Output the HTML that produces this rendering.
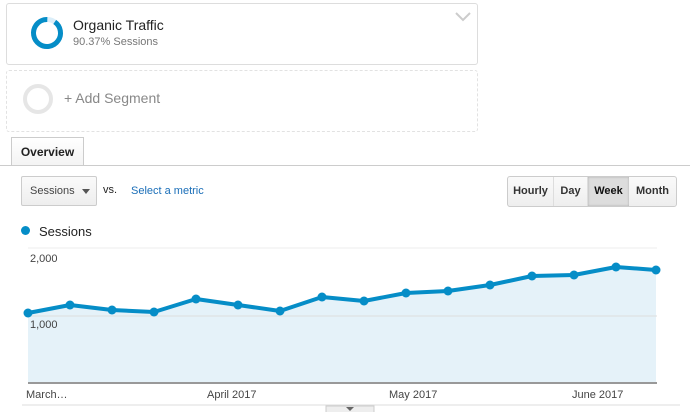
<!DOCTYPE html>
<html><head><style>
body{margin:0;width:690px;height:412px;background:#fff;font-family:"Liberation Sans",Arial,sans-serif;position:relative;overflow:hidden}
.a{position:absolute}
</style></head><body>
<div class="a" style="left:6px;top:3px;width:470px;height:60px;border:1px solid #ddd;border-radius:3px"></div>
<svg class="a" style="left:30px;top:16px" width="34" height="34"><circle cx="17" cy="17" r="13.5" fill="none" stroke="#dbeef9" stroke-width="5"/><circle cx="17" cy="17" r="13.5" fill="none" stroke="#058dc7" stroke-width="5" stroke-dasharray="76.6 85" transform="rotate(-55 17 17)"/></svg>
<div class="a" style="left:73px;top:17px;font-size:14px;color:#222">Organic Traffic</div>
<div class="a" style="left:73px;top:36px;font-size:11px;color:#777">90.37% Sessions</div>
<svg class="a" style="left:455px;top:12px" width="16" height="10"><path d="M1 1L8 8L15 1" fill="none" stroke="#ccc" stroke-width="2"/></svg>
<div class="a" style="left:6px;top:70px;width:470px;height:60px;border:1px dashed #e2e2e2;border-radius:3px"></div>
<svg class="a" style="left:22px;top:83px" width="32" height="32"><circle cx="16" cy="16" r="13" fill="none" stroke="#e6e6e6" stroke-width="4"/></svg>
<div class="a" style="left:64px;top:90px;font-size:14px;color:#888">+ Add Segment</div>
<div class="a" style="left:11px;top:137px;width:71px;height:28px;border:1px solid #ccc;border-bottom:none;background:linear-gradient(#fff,#f3f3f3);font-size:12px;font-weight:bold;color:#222;text-align:center;line-height:28px">Overview</div>
<div class="a" style="left:0;top:165px;width:690px;height:1px;background:#ccc"></div>
<div class="a" style="left:21px;top:176px;width:76px;height:30px;border:1px solid #ccc;border-radius:2px;background:linear-gradient(#fafafa,#eee);font-size:11px;color:#444;line-height:28px;padding-left:8px;box-sizing:border-box">Sessions<span style="position:absolute;left:60px;top:12px;border:4px solid transparent;border-top:5px solid #555"></span></div>
<div class="a" style="left:103px;top:184px;font-size:11px;color:#222">vs.</div>
<div class="a" style="left:131px;top:185px;font-size:11px;color:#1a6eb8">Select a metric</div>
<div class="a" style="left:507px;top:176px;height:29px;border:1px solid #ccc;border-radius:3px;display:flex;font-size:11px;font-weight:bold;color:#333;line-height:29px;background:linear-gradient(#fafafa,#eee);overflow:hidden">
<div style="width:45px;text-align:center;border-right:1px solid #ddd">Hourly</div>
<div style="width:33px;text-align:center;border-right:1px solid #ddd">Day</div>
<div style="width:41px;text-align:center;background:#ddd;box-shadow:inset 0 0 2px #aaa;color:#111">Week</div>
<div style="width:47px;text-align:center">Month</div></div>
<div class="a" style="left:21px;top:226px;width:9px;height:9px;border-radius:50%;background:#058dc7"></div>
<div class="a" style="left:39px;top:224px;font-size:13px;color:#222">Sessions</div>
<svg class="a" style="left:0;top:240px" width="690" height="172">
<line x1="28" y1="8" x2="657" y2="8" stroke="#eee"/>
<polygon fill="#e5f2f9" points="28,73 70,65 112,70 154,72 196,59 238,65 280,71 322,57 364,61 406,53 448,51 490,45 532,36 574,35 616,27 656,30 656,142 28,142"/>
<line x1="28" y1="76" x2="657" y2="76" stroke="#ddd"/>
<polyline fill="none" stroke="#058dc7" stroke-width="4" stroke-linejoin="round" points="28,73 70,65 112,70 154,72 196,59 238,65 280,71 322,57 364,61 406,53 448,51 490,45 532,36 574,35 616,27 656,30"/>
<g fill="#058dc7"><circle cx="28" cy="73" r="4.5"/><circle cx="70" cy="65" r="4.5"/><circle cx="112" cy="70" r="4.5"/><circle cx="154" cy="72" r="4.5"/><circle cx="196" cy="59" r="4.5"/><circle cx="238" cy="65" r="4.5"/><circle cx="280" cy="71" r="4.5"/><circle cx="322" cy="57" r="4.5"/><circle cx="364" cy="61" r="4.5"/><circle cx="406" cy="53" r="4.5"/><circle cx="448" cy="51" r="4.5"/><circle cx="490" cy="45" r="4.5"/><circle cx="532" cy="36" r="4.5"/><circle cx="574" cy="35" r="4.5"/><circle cx="616" cy="27" r="4.5"/><circle cx="656" cy="30" r="4.5"/></g>
<line x1="28" y1="143" x2="657" y2="143" stroke="#333" stroke-width="1"/>
<g font-size="11" fill="#444" font-family="Liberation Sans,Arial,sans-serif"><text x="30" y="22">2,000</text><text x="30" y="88">1,000</text>
<text x="26" y="158">March…</text><text x="207" y="158">April 2017</text><text x="389" y="158">May 2017</text><text x="572" y="158">June 2017</text></g>
<line x1="22" y1="165" x2="680" y2="165" stroke="#ddd"/>
<rect x="326" y="166" width="48" height="8" fill="#eee" stroke="#ccc"/>
<path d="M346 167L354 167L350 171Z" fill="#666"/>
</svg>
</body></html>
